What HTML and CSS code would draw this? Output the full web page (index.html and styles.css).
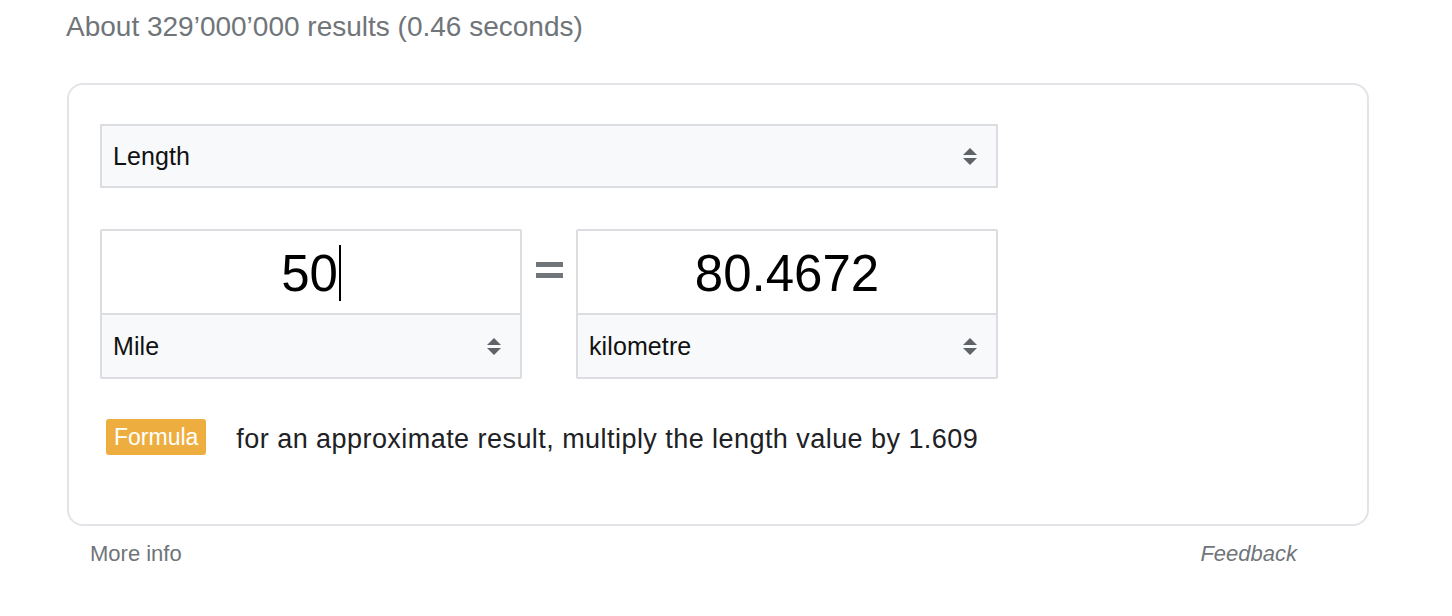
FILE: index.html
```html
<!DOCTYPE html>
<html>
<head>
<meta charset="utf-8">
<link rel="stylesheet" href="styles.css">
</head>
<body>
<div class="page">
  <div class="stats">About 329’000’000 results (0.46 seconds)</div>
  <div class="card">
    <div class="select select-wide">
      <span class="select-label">Length</span>
      <span class="spinner"><span class="tri-up"></span><span class="tri-down"></span></span>
    </div>
    <div class="convert-row">
      <div class="unit-box">
        <div class="value"><span>50</span><span class="caret"></span></div>
        <div class="select select-unit">
          <span class="select-label">Mile</span>
          <span class="spinner"><span class="tri-up"></span><span class="tri-down"></span></span>
        </div>
      </div>
      <div class="equals"><span class="bar"></span><span class="bar"></span></div>
      <div class="unit-box">
        <div class="value"><span>80.4672</span></div>
        <div class="select select-unit">
          <span class="select-label">kilometre</span>
          <span class="spinner"><span class="tri-up"></span><span class="tri-down"></span></span>
        </div>
      </div>
    </div>
    <div class="formula-row">
      <span class="badge">Formula</span>
      <span class="formula-text">for an approximate result, multiply the length value by 1.609</span>
    </div>
  </div>
  <div class="footer">
    <span class="more">More info</span>
    <span class="feedback">Feedback</span>
  </div>
</div>
</body>
</html>
```

FILE: styles.css
```css
html, body {
  margin: 0;
  padding: 0;
  background: #ffffff;
}
body {
  font-family: "Liberation Sans", Arial, sans-serif;
  color: #202124;
}
.page {
  padding: 9px 0 0 67px;
  width: 1302px;
}
.stats {
  font-size: 28px;
  line-height: 36px;
  color: #70757a;
  margin-left: -1px;
}
.card {
  margin-top: 38px;
  box-sizing: border-box;
  width: 1302px;
  height: 443px;
  border: 2px solid #e3e4e8;
  border-radius: 16px;
  padding: 39px 31px 0 31px;
}
.select {
  box-sizing: border-box;
  display: flex;
  align-items: center;
  justify-content: space-between;
  background: #f8f9fa;
  font-size: 25px;
  color: #111;
}
.select-wide {
  width: 898px;
  height: 64px;
  border: 2px solid #dcdde1;
  padding: 0 19px 0 11px;
}
.select-label {
  line-height: 30px;
  letter-spacing: 0.1px;
}
.spinner {
  display: flex;
  flex-direction: column;
  gap: 3px;
}
.tri-up {
  width: 0;
  height: 0;
  border-left: 7px solid transparent;
  border-right: 7px solid transparent;
  border-bottom: 7px solid #5f6368;
}
.tri-down {
  width: 0;
  height: 0;
  border-left: 7px solid transparent;
  border-right: 7px solid transparent;
  border-top: 7px solid #5f6368;
}
.convert-row {
  display: flex;
  align-items: flex-start;
  margin-top: 41px;
}
.unit-box {
  box-sizing: border-box;
  width: 422px;
  height: 150px;
  border: 2px solid #dcdde1;
  border-radius: 2px;
  display: flex;
  flex-direction: column;
}
.value {
  height: 84px;
  border-bottom: 2px solid #dcdde1;
  display: flex;
  align-items: center;
  justify-content: center;
  font-size: 51px;
  color: #000;
  padding-top: 2px;
  box-sizing: border-box;
}
.caret {
  display: inline-block;
  width: 2px;
  height: 56px;
  background: #000;
  margin-left: 1px;
}
.select-unit {
  flex: 1;
  padding: 0 19px 0 11px;
}
.equals {
  width: 54px;
  display: flex;
  flex-direction: column;
  align-items: center;
  gap: 6px;
  padding-top: 33px;
}
.bar {
  display: block;
  width: 27px;
  height: 5px;
  background: #70757a;
}
.formula-row {
  display: flex;
  align-items: center;
  margin-top: 40px;
  padding-left: 6px;
}
.badge {
  background: #eeae3f;
  color: #ffffff;
  font-size: 23px;
  line-height: 36px;
  padding: 0 8px;
  border-radius: 3px;
}
.formula-text {
  font-size: 27px;
  letter-spacing: 0.45px;
  margin-left: 30px;
  padding-top: 4px;
  color: #202124;
}
.footer {
  display: flex;
  justify-content: space-between;
  padding: 15px 72px 0 23px;
  font-size: 22px;
  color: #70757a;
}
.feedback {
  font-style: italic;
}
```
